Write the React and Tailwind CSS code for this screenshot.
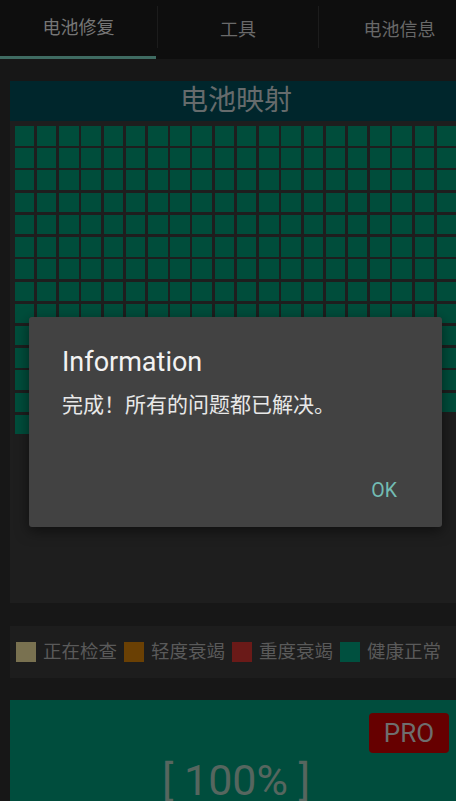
import React from "react";

const FONT = { fontFamily: 'Roboto, "Noto Sans CJK SC", sans-serif' };

function Cell() {
  return <div className="w-[19.5px] h-[19.5px] bg-[#004d3b]" />;
}

export default function App() {
  const cells = Array.from({ length: 268 });
  const legend = [
    { c: "bg-[#797150]", t: "正在检查" },
    { c: "bg-[#6a4004]", t: "轻度衰竭" },
    { c: "bg-[#6a1a18]", t: "重度衰竭" },
    { c: "bg-[#00503f]", t: "健康正常" },
  ];
  return (
    <div className="w-[456px] h-[801px] overflow-hidden bg-[#171717] relative" style={FONT}>
      <div className="w-[480px]">
        {/* Tab bar */}
        <div className="h-[59px] bg-[#0e0e0e] flex relative">
          <div className="w-[157px] flex flex-col">
            <div className="flex-1 flex items-center justify-center text-[18px] text-[#767676] pb-[1px]">电池修复</div>
            <div className="h-[3px] bg-[#3f6b62] mr-[1px]" />
          </div>
          <div className="w-px h-[42px] mt-[6px] bg-[#1c1c1c]" />
          <div className="w-[160px] flex items-center justify-center text-[18px] text-[#6a6a6a] pb-[1px]">工具</div>
          <div className="w-px h-[42px] mt-[6px] bg-[#1c1c1c]" />
          <div className="w-[161px] flex items-center justify-center text-[18px] text-[#686868] pb-[1px]">电池信息</div>
        </div>

        {/* Battery map panel */}
        <div className="ml-[10px] mt-[22px] w-[452px] h-[522px] bg-[#1e1e1e] flex flex-col">
          <div className="h-[40px] bg-[#00262c] flex items-center justify-center text-[28px] text-[#666b6c]">电池映射</div>
          <div className="pt-[5px] pl-[4.7px] grid grid-cols-[repeat(20,19.5px)] gap-[2.73px]">
            {cells.map((_, i) => (
              <Cell key={i} />
            ))}
          </div>
        </div>

        {/* Legend */}
        <div className="ml-[10px] mt-[23px] w-[452px] h-[52px] bg-[#1d1d1d] flex items-center pl-[6px] gap-[7px]">
          {legend.map((l) => (
            <div key={l.t} className="flex items-center gap-[7px]">
              <div className={`w-[20px] h-[20px] ${l.c}`} />
              <span className="text-[18.5px] text-[#5a5a5a] leading-none">{l.t}</span>
            </div>
          ))}
        </div>

        {/* Bottom status */}
        <div className="ml-[10px] mt-[22px] w-[452px] h-[120px] bg-[#004d3d] flex flex-col">
          <div className="flex justify-end pt-[13px] pr-[13px]">
            <div className="w-[80px] h-[40px] rounded-[4px] bg-[#660000] flex items-center justify-center text-[26px] text-[#6e6e6e]">PRO</div>
          </div>
          <div className="text-center text-[43px] leading-[48px] text-[#56665f] mt-[3px]">[ 100% ]</div>
        </div>
      </div>

      {/* Dialog */}
      <div className="absolute left-[29px] top-[317px] w-[413px] h-[210px] bg-[#424242] rounded-[3px] shadow-[0_4px_14px_rgba(0,0,0,0.5)] flex flex-col pl-[33px] pt-[29px]">
        <div className="text-[27px] leading-[32px] text-[#f2f2f2]">Information</div>
        <div className="mt-[11px] text-[21px] leading-[28px] text-[#e8e8e8]" style={{ fontFamily: '"Noto Sans CJK SC", sans-serif' }}>完成！所有的问题都已解决。</div>
        <div className="mt-auto flex justify-end pr-[45px] pb-[24px]">
          <span className="text-[19.5px] leading-[24px] text-[#73bcb3]">OK</span>
        </div>
      </div>
    </div>
  );
}
